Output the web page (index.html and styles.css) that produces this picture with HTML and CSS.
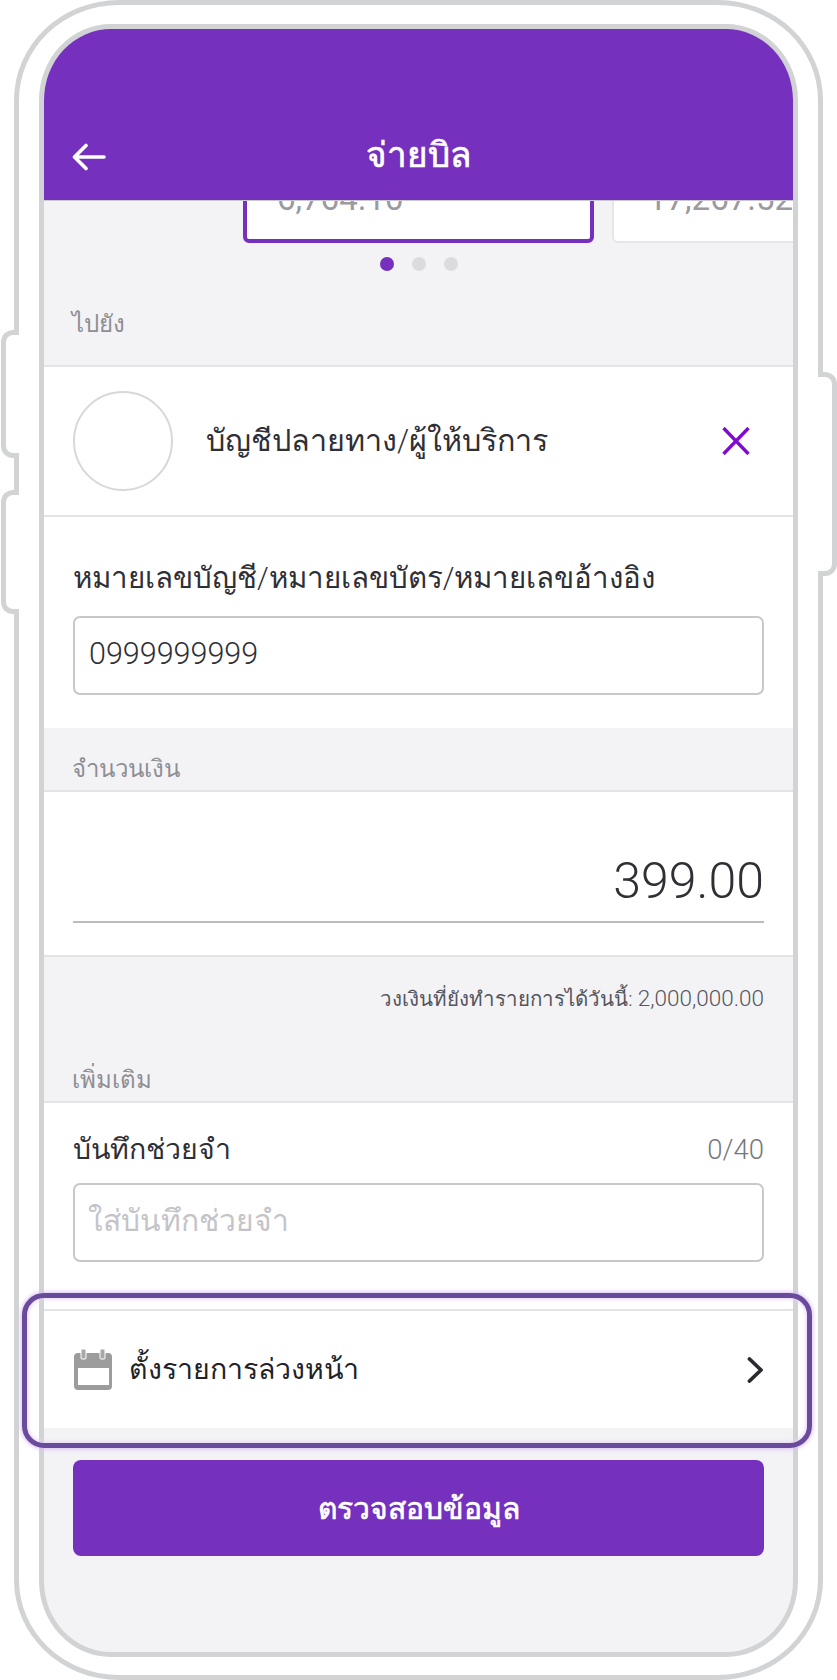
FILE: index.html
```html
<!DOCTYPE html>
<html lang="th">
<head>
<meta charset="utf-8">
<title>จ่ายบิล</title>
<link rel="stylesheet" href="styles.css">
</head>
<body>
<div class="page">
  <div class="side-btn side-l1"></div>
  <div class="side-btn side-l2"></div>
  <div class="side-btn side-r"></div>
  <div class="device">
    <div class="bezel">
      <div class="screen">
        <header class="topbar">
          <svg class="back" viewBox="0 0 34 28" aria-hidden="true"><path d="M32 14H3M14 2.500 2.500 14 14 25.500" fill="none" stroke="#fff" stroke-width="3.600" stroke-linecap="round" stroke-linejoin="round"/></svg>
          <h1 class="title">จ่ายบิล</h1>
        </header>
        <div class="strip">
          <div class="acct-card acct-card-active">6,764.10</div>
          <div class="acct-card">17,267.52</div>
        </div>
        <div class="dots"><span class="dot dot-on"></span><span class="dot"></span><span class="dot"></span></div>
        <div class="sec-label sec-to">ไปยัง</div>
        <section class="panel dest">
          <div class="avatar"></div>
          <div class="dest-name">บัญชีปลายทาง/ผู้ให้บริการ</div>
          <svg class="close" viewBox="0 0 28 28" aria-hidden="true"><path d="M1.500 1 26.500 27M26.500 1 1.500 27" fill="none" stroke="#7f0ad0" stroke-width="3.400"/></svg>
        </section>
        <section class="panel acct">
          <div class="field-label acct-label">หมายเลขบัญชี/หมายเลขบัตร/หมายเลขอ้างอิง</div>
          <div class="input">0999999999</div>
        </section>
        <div class="sec-label sec-amount">จำนวนเงิน</div>
        <section class="panel amount-panel">
          <div class="amount">399.00</div>
        </section>
        <div class="limit">วงเงินที่ยังทำรายการได้วันนี้: <span class="limit-num">2,000,000.00</span></div>
        <div class="sec-label sec-more">เพิ่มเติม</div>
        <section class="panel memo">
          <div class="memo-head"><span class="field-label memo-label">บันทึกช่วยจำ</span><span class="count">0/40</span></div>
          <div class="input input-memo">ใส่บันทึกช่วยจำ</div>
        </section>
        <section class="panel schedule">
          <svg class="cal" viewBox="0 0 38 41" aria-hidden="true">
            <rect x="0" y="4" width="38" height="37" rx="4" fill="#9c9c9c"/>
            <rect x="4" y="19" width="31" height="17" fill="#fff"/>
            <rect x="7" y="0" width="5" height="10" rx="1" fill="#a8a8a8" stroke="#fff" stroke-width="1"/>
            <rect x="26" y="0" width="5" height="10" rx="1" fill="#a8a8a8" stroke="#fff" stroke-width="1"/>
          </svg>
          <div class="schedule-text">ตั้งรายการล่วงหน้า</div>
          <svg class="chev" viewBox="0 0 16 26" aria-hidden="true"><path d="M2.500 2 14 13 2.500 24" fill="none" stroke="#2a2a30" stroke-width="3.800" stroke-linecap="round" stroke-linejoin="round"/></svg>
        </section>
        <button class="cta" type="button">ตรวจสอบข้อมูล</button>
      </div>
    </div>
  </div>
  <div class="highlight"></div>
</div>
</body>
</html>
```
FILE: styles.css
```css
* { box-sizing: border-box; }
html, body { margin: 0; padding: 0; background: #fff; }
body { font-family: "Roboto", "Liberation Sans", "Noto Sans", sans-serif; font-weight: 300; color: #2f2f36; }
.page { position: relative; width: 837px; height: 1680px; overflow: hidden; }
.device { margin-left: 14px; width: 809px; height: 1680px; border: 5px solid #d2d3d5; border-radius: 105px / 100px; padding: 19px 20px 18px; background: #fff; }
.bezel { height: 100%; border: 5px solid #d2d3d5; border-radius: 72px / 76px; overflow: hidden; background: #f3f3f6; }
.screen { display: flex; flex-direction: column; height: 100%; }
.side-btn { position: absolute; background: #fff; border: 5px solid #d2d3d5; }
.side-l1, .side-l2 { left: 1px; width: 18px; border-right: 0; border-radius: 12px 0 0 12px; }
.side-l1 { top: 330px; height: 128px; }
.side-l2 { top: 490px; height: 124px; }
.side-r { left: 818px; top: 372px; width: 19px; height: 204px; border-left: 0; border-radius: 0 12px 12px 0; z-index: 1; }
.topbar { position: relative; flex: none; height: 172px; background: #7530bd; border-bottom: 1px solid #c9c9cf; display: flex; align-items: flex-end; justify-content: center; padding-bottom: 22px; }
.back { position: absolute; left: 28px; bottom: 29px; width: 34px; height: 28px; }
.title { margin: 0; font-size: 35px; font-weight: 500; line-height: 44px; color: #fff; -webkit-text-stroke: 0.7px #fff; }
.strip { flex: none; height: 42px; overflow: hidden; display: flex; align-items: flex-end; gap: 18px; padding-left: 199px; }
.acct-card { flex: none; width: 351px; height: 120px; background: #fff; border: 2px solid #e6e6ea; border-radius: 6px; padding: 54px 0 0 34px; font-size: 33px; font-weight: 400; line-height: 40px; color: #9a9a9f; }
.acct-card-active { border: 4px solid #7530bd; padding-left: 30px; padding-top: 52px; }
.dots { flex: none; display: flex; justify-content: center; gap: 18px; margin-top: 14px; height: 14px; }
.dot { width: 14px; height: 14px; border-radius: 50%; background: #dcdcde; }
.dot-on { background: #7530bd; }
.sec-label { flex: none; padding-left: 28px; font-size: 24px; line-height: 30px; color: #8e8e93; }
.sec-to { padding-top: 38px; padding-bottom: 26px; }
.sec-amount { padding-top: 26px; padding-bottom: 6px; }
.sec-more { padding-top: 51px; padding-bottom: 6px; }
.panel { flex: none; background: #fff; border-top: 2px solid #e4e4e7; }
.dest { height: 150px; display: flex; align-items: center; padding: 0 43px 0 29px; }
.avatar { flex: none; width: 100px; height: 100px; border-radius: 50%; border: 2px solid #d8d8d8; }
.dest-name { flex: 1; margin-left: 33px; font-size: 30.500px; line-height: 40px; }
.close { flex: none; width: 28px; height: 28px; }
.acct { height: 213px; padding: 41px 29px 0; }
.field-label { font-size: 30px; line-height: 40px; }
.acct-label { font-size: 29.500px; }
.memo-label { font-size: 28.500px; }
.input { height: 79px; margin-top: 18px; border: 2px solid #c8c8cc; border-radius: 7px; background: #fff; padding: 0 14px; font-size: 30.500px; line-height: 72px; }
.amount-panel { height: 167px; padding: 59px 29px 0; border-bottom: 2px solid #e4e4e7; }
.amount { text-align: right; font-size: 50px; line-height: 60px; padding-bottom: 10px; border-bottom: 2px solid #bcbcc0; }
.limit { flex: none; padding: 26px 29px 0; text-align: right; font-size: 20.500px; line-height: 30px; color: #55555c; }
.limit-num { font-size: 22.500px; }
.memo { height: 208px; padding: 27px 29px 0; }
.memo-head { display: flex; align-items: center; justify-content: space-between; }
.count { font-size: 27.500px; line-height: 40px; color: #77777c; }
.input-memo { margin-top: 13px; color: #c4c4c8; font-size: 30px; padding-left: 13px; }
.schedule { height: 119px; display: flex; align-items: center; padding: 0 30px; }
.cal { flex: none; width: 38px; height: 41px; }
.schedule-text { flex: 1; margin-left: 17px; font-size: 28.500px; line-height: 40px; color: #222227; }
.chev { flex: none; width: 16px; height: 26px; }
.cta { flex: none; display: block; margin: 32px 29px 0; height: 96px; border: 0; border-radius: 8px; background: #7530bd; color: #fff; font-family: inherit; font-size: 30px; font-weight: 500; -webkit-text-stroke: 0.7px #fff; }
.highlight { position: absolute; left: 22px; top: 1293px; width: 790px; height: 155px; border: 5px solid #6a4a9c; border-radius: 22px; box-shadow: 0 0 4px 1px #dcbdf3, inset 0 0 4px 1px #e6d2f6; z-index: 2; }
```
